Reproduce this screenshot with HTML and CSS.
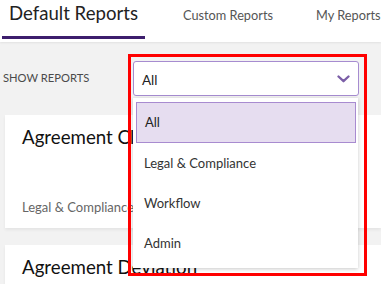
FILE: index.html
```html
<!DOCTYPE html>
<html lang="en">
<head>
    <meta charset="UTF-8">
    <meta name="viewport" content="width=device-width, initial-scale=1.0">
    <title>Reports</title>
    <link rel="stylesheet" href="styles.css">
</head>
<body>

    <div class="tabs">
        <div class="tab active">Default Reports</div>
        <div class="tab custom">Custom Reports</div>
        <div class="tab mine">My Reports</div>
    </div>

    <div class="filter">
        <div class="filter-label">SHOW REPORTS</div>
        <div class="picker">
            <div class="select">
                <span>All</span>
                <svg class="chevron" width="13" height="8" viewBox="0 0 13 8">
                    <path d="M1.5 1.5 L6.5 6.2 L11.5 1.5" fill="none" stroke="#7b5ea7" stroke-width="2.3" stroke-linecap="round" stroke-linejoin="round"/>
                </svg>
            </div>
            <div class="menu">
                <div class="option selected">All</div>
                <div class="option">Legal &amp; Compliance</div>
                <div class="option">Workflow</div>
                <div class="option">Admin</div>
            </div>
            <div class="highlight"></div>
        </div>
    </div>

    <div class="cards">
        <div class="card">
            <div class="card-title">Agreement Clause Report</div>
            <div class="card-tag">Legal &amp; Compliance</div>
        </div>
        <div class="card">
            <div class="card-title">Agreement Deviation</div>
        </div>
    </div>

</body>
</html>
```

FILE: styles.css
```css
body {
    font-family: Lato, "Liberation Sans", sans-serif;
    margin: 0;
    padding: 0;
    background-color: #f2f2f2;
    overflow: hidden;
    width: 381px;
    height: 284px;
}

.tabs {
    background-color: #fff;
    display: flex;
    height: 42px;
    box-shadow: 0px 1px 2px rgba(0, 0, 0, 0.07);
    position: relative;
    z-index: 1;
}

.tab {
    color: #555;
    font-size: 12.75px;
    line-height: 15px;
    padding-top: 8px;
    white-space: nowrap;
}

.tab.active {
    color: #222;
    font-size: 18.6px;
    line-height: 22px;
    padding: 2px 0 0 7px;
    margin-left: 2px;
    width: 143px;
    height: 36px;
    box-sizing: border-box;
    border-bottom: 3px solid #3d1e6d;
    height: 39px;
}

.tab.custom {
    margin-left: 38px;
    width: 90px;
}

.tab.mine {
    margin-left: 43px;
}

.filter {
    display: flex;
    align-items: flex-start;
    height: 54px;
    padding: 19px 0 0 3px;
    position: relative;
    z-index: 2;
}

.filter-label {
    color: #4a4a4a;
    font-size: 11.2px;
    line-height: 14px;
    width: 130px;
    margin-top: 10px;
}

.picker {
    position: relative;
    width: 226px;
}

.select {
    height: 35px;
    box-sizing: border-box;
    border: 1px solid #a68cd0;
    border-radius: 3px;
    background-color: #fff;
    display: flex;
    align-items: center;
    justify-content: space-between;
    padding: 2px 8px 0 8px;
    font-size: 13.5px;
    line-height: 16px;
    color: #222;
}

.chevron {
    margin-top: -2px;
}

.menu {
    position: absolute;
    top: 37px;
    left: 0;
    width: 225px;
    background-color: #fff;
    padding: 4px 0 5px;
    box-shadow: 0px 1px 4px rgba(0, 0, 0, 0.22);
}

.option {
    height: 40px;
    line-height: 40px;
    padding-left: 11px;
    font-size: 13px;
    color: #333;
}

.option.selected {
    margin: 0 2px 0 3px;
    height: 41px;
    box-sizing: border-box;
    line-height: 39px;
    padding-left: 8px;
    background-color: #e6ddf0;
    border: 1px solid #a88bd0;
    color: #222;
}

.highlight {
    position: absolute;
    left: -5px;
    top: -7px;
    width: 239px;
    height: 222px;
    border: 3px solid #ff0000;
    box-sizing: border-box;
}

.cards {
    padding-left: 5px;
}

.card {
    background-color: #fff;
    height: 113px;
    margin-bottom: 17px;
    padding-left: 17px;
    box-shadow: 0px 2px 3px rgba(0, 0, 0, 0.06);
}

.card-title {
    font-size: 18.7px;
    line-height: 22px;
    color: #111;
    padding-top: 11px;
    white-space: nowrap;
}

.card-tag {
    font-size: 13px;
    line-height: 16px;
    color: #666;
    margin-top: 51px;
}
```
